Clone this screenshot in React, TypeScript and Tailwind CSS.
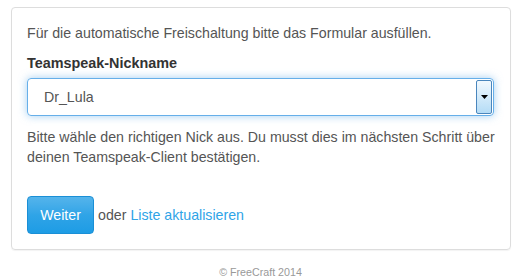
import React from "react";

export default function App() {
  return (
    <div
      className="w-[521px] h-[280px] bg-white text-[#555555] text-[14.2px] leading-[20px]"
      style={{ fontFamily: '"Liberation Sans", Arial, sans-serif' }}
    >
      <div className="pt-[7px] pl-[11px]">
        <div className="w-[500px] h-[243px] border border-[#dddddd] rounded-[4px] px-[15px] pt-[15px] shadow-[0_1px_1px_rgba(0,0,0,0.05)]">
          <p>Für die automatische Freischaltung bitte das Formular ausfüllen.</p>
          <div className="mt-[10px] font-bold text-[14.4px] text-[#333333]">Teamspeak-Nickname</div>
          <div className="mt-[5px] h-[38px] w-[467px] rounded-[4px] border border-[#66afe9] shadow-[0_0_8px_rgba(102,175,233,0.6)] flex items-stretch overflow-hidden">
            <div className="flex-1 flex items-center pl-[16px] text-[#555555]">Dr_Lula</div>
            <div className="w-[16px] my-[1px] mr-[1px] rounded-[2px] border border-[#4a86bd] bg-gradient-to-b from-[#f2f9fe] to-[#b4dcf6] flex items-center justify-center">
              <svg width="7" height="4" viewBox="0 0 7 4">
                <polygon points="0,0 7,0 3.5,4" fill="#000" />
              </svg>
            </div>
          </div>
          <p className="mt-[11px]">
            Bitte wähle den richtigen Nick aus. Du musst dies im nächsten Schritt über deinen Teamspeak-Client bestätigen.
          </p>
          <div className="mt-[29px] flex items-center">
            <button className="h-[38px] w-[67px] rounded-[4px] border border-[#1a8fd6] bg-gradient-to-b from-[#54b4eb] via-[#2fa4e7] to-[#1d9ce5] text-white text-[14.2px]">
              Weiter
            </button>
            <span className="ml-[4px]">oder</span>
            <a className="ml-[4px] text-[#2fa4e7]">Liste aktualisieren</a>
          </div>
        </div>
      </div>
      <div className="mt-[15px] text-center text-[10.7px] leading-[14px] text-[#999999]">© FreeCraft 2014</div>
    </div>
  );
}
